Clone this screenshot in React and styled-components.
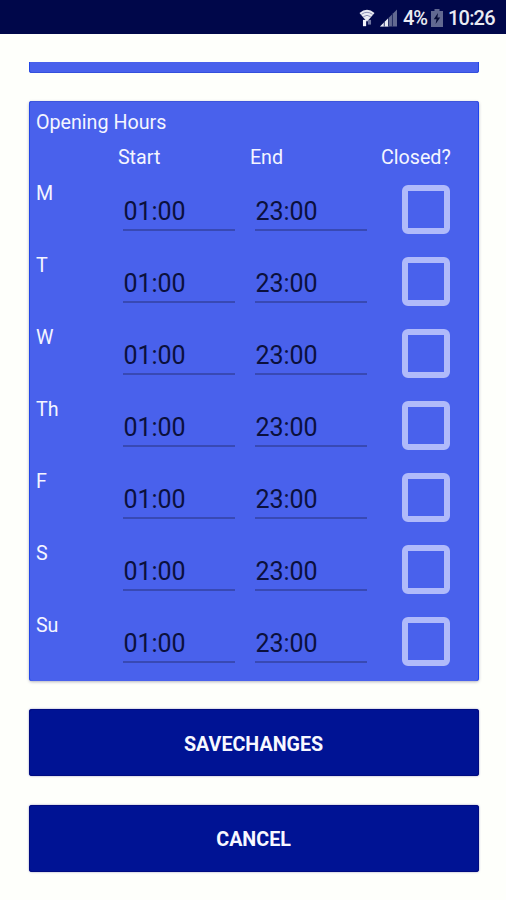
import React, { useState } from "react";
import styled, { createGlobalStyle } from "styled-components";

const GlobalStyle = createGlobalStyle`
  * {
    box-sizing: border-box;
  }

  body {
    margin: 0;
    background: #fefffb;
    font-family: Roboto, sans-serif;
  }
`;

const Screen = styled.div`
  width: 506px;
  height: 900px;
  overflow: hidden;
  background: #fefffb;
`;

const StatusBar = styled.header`
  display: flex;
  align-items: center;
  justify-content: flex-end;
  height: 34px;
  padding: 2px 11px 0 0;
  background: #00074a;
  color: #e9ebf3;
`;

const StatusText = styled.span`
  width: ${({ $width }) => $width}px;
  font-size: 20px;
  font-weight: 500;
  line-height: 24px;
  white-space: nowrap;
  letter-spacing: ${({ $spacing }) => $spacing || 0}px;
`;

const StatusIcon = styled.svg`
  display: block;
  flex: none;
  margin-right: ${({ $gap }) => $gap}px;
`;

const Content = styled.main`
  display: flex;
  flex-direction: column;
  padding: 28px 27.4px 0 28.5px;
`;

const PreviousCard = styled.div`
  height: 11px;
  border-radius: 0 0 3px 3px;
  background: #4961ec;
  box-shadow: inset 0 -1px 0 #3450dc, inset 1px 0 0 #2447e6,
    inset -1px 0 0 #2447e6;
`;

const Card = styled.section`
  height: 580px;
  margin-top: 27.5px;
  padding: 10.5px 7px 0 7.4px;
  border-radius: 3px;
  background: #4961ec;
  box-shadow: inset 0 1px 0 #3e55dc, inset 1px 0 0 #2447e6,
    inset -1px 0 0 #1f43ee, 0 1px 3px rgba(40, 40, 80, 0.35);
`;

const Label = styled.span`
  color: #f4f5ff;
  font-size: 19.7px;
  line-height: 24px;
`;

const Title = styled(Label)`
  display: block;
  margin-bottom: 11px;
`;

const Row = styled.div`
  display: grid;
  grid-template-columns: 82px 132px 131px 1fr;
  align-items: start;
  height: ${({ $height }) => $height}px;
`;

const DayLabel = styled(Label)`
  padding-top: 1px;
`;

const TimeInput = styled.input`
  width: 112px;
  height: 39px;
  margin: 11px 0 0 5.5px;
  padding: 1px 0 0;
  border: 0;
  border-bottom: 2px solid #3849b4;
  border-radius: 0;
  outline: 0;
  background: transparent;
  color: #0b103d;
  font-family: inherit;
  font-size: 25px;
`;

const Checkbox = styled.input`
  appearance: none;
  width: 48.5px;
  height: 49px;
  margin: 4px 0 0 21px;
  border: 6px solid #b0bafa;
  border-radius: 6px;
  background: ${({ checked }) => (checked ? "#b0bafa" : "transparent")};
`;

const Button = styled.button`
  height: 66.8px;
  margin-top: 28.9px;
  padding: 3px 0 0;
  border: 0;
  border-radius: 3px;
  background: #001394;
  box-shadow: inset 0 0 0 1px #000b80, 0 0 2px rgba(30, 30, 140, 0.5);
  color: #f7f8ff;
  font-family: inherit;
  font-size: 19.7px;
  font-weight: 700;
  text-transform: uppercase;
`;

const days = ["M", "T", "W", "Th", "F", "S", "Su"];

const DayRow = ({ day }) => {
  const [start, setStart] = useState("01:00");
  const [end, setEnd] = useState("23:00");
  const [closed, setClosed] = useState(false);

  return (
    <Row $height={72}>
      <DayLabel>{day}</DayLabel>
      <TimeInput value={start} onChange={(e) => setStart(e.target.value)} />
      <TimeInput value={end} onChange={(e) => setEnd(e.target.value)} />
      <Checkbox
        type="checkbox"
        checked={closed}
        onChange={(e) => setClosed(e.target.checked)}
      />
    </Row>
  );
};

const WifiIcon = () => (
  <StatusIcon $gap={5} width="16" height="18" viewBox="0 0 17 19">
    <path d="M0.5 4.2Q8.5 -2.6 16.5 4.2L8.5 13.5Z" fill="#e9ebf3" />
    <path
      d="M2.6 5.6Q8.5 1.3 14.4 5.6M4.6 8.1Q8.5 5.2 12.4 8.1"
      fill="none"
      stroke="#7b80a8"
      strokeWidth="0.9"
    />
    <path d="M4.2 11.5h3.4v6.7H4.2z" fill="#f4f5fa" />
    <path d="M9.4 11.5h3.4v5H9.4z" fill="#6f75a0" />
  </StatusIcon>
);

const SignalIcon = () => (
  <StatusIcon $gap={6} width="17" height="18" viewBox="0 0 18 18">
    <path d="M0 18L18 0V18Z" fill="#626991" />
    <path d="M0 18L9 9V18Z" fill="#e9ebf3" />
    <path d="M4.5 13v5M9 9v9M13.2 4v14" stroke="#20285f" strokeWidth="1" />
  </StatusIcon>
);

const BatteryIcon = () => (
  <StatusIcon $gap={5} width="12" height="18" viewBox="0 0 12 18">
    <path d="M3.5 0h5v2H12v16H0V2h3.5z" fill="#626991" />
    <path d="M7 4L2.8 10.3h2.7L4.6 15 9.2 8.6H6.4z" fill="#050a35" />
  </StatusIcon>
);

const App = () => (
  <>
    <GlobalStyle />
    <Screen>
      <StatusBar>
        <WifiIcon />
        <SignalIcon />
        <StatusText $width={28} $spacing={-1.2}>
          4%
        </StatusText>
        <BatteryIcon />
        <StatusText $width={47} $spacing={-0.8}>
          10:26
        </StatusText>
      </StatusBar>
      <Content>
        <PreviousCard />
        <Card>
          <Title>Opening Hours</Title>
          <Row $height={35}>
            <span />
            <Label>Start</Label>
            <Label>End</Label>
            <Label>Closed?</Label>
          </Row>
          {days.map((day) => (
            <DayRow key={day} day={day} />
          ))}
        </Card>
        <Button type="button">SaveChanges</Button>
        <Button type="button">Cancel</Button>
      </Content>
    </Screen>
  </>
);

export default App;
